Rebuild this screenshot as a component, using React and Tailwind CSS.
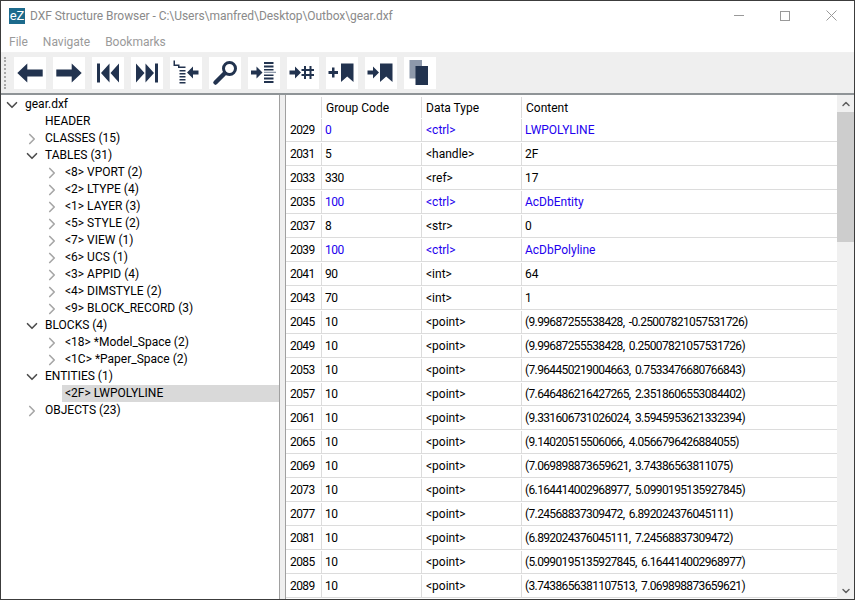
import { ChevronDown, ChevronRight, ChevronUp } from "lucide-react"

const NAVY = "#22334f"

const treeRows = [
  { label: "gear.dxf", indent: 0, arrow: "open" },
  { label: "HEADER", indent: 1 },
  { label: "CLASSES (15)", indent: 1, arrow: "closed" },
  { label: "TABLES (31)", indent: 1, arrow: "open" },
  { label: "<8> VPORT (2)", indent: 2, arrow: "closed" },
  { label: "<2> LTYPE (4)", indent: 2, arrow: "closed" },
  { label: "<1> LAYER (3)", indent: 2, arrow: "closed" },
  { label: "<5> STYLE (2)", indent: 2, arrow: "closed" },
  { label: "<7> VIEW (1)", indent: 2, arrow: "closed" },
  { label: "<6> UCS (1)", indent: 2, arrow: "closed" },
  { label: "<3> APPID (4)", indent: 2, arrow: "closed" },
  { label: "<4> DIMSTYLE (2)", indent: 2, arrow: "closed" },
  { label: "<9> BLOCK_RECORD (3)", indent: 2, arrow: "closed" },
  { label: "BLOCKS (4)", indent: 1, arrow: "open" },
  { label: "<18> *Model_Space (2)", indent: 2, arrow: "closed" },
  { label: "<1C> *Paper_Space (2)", indent: 2, arrow: "closed" },
  { label: "ENTITIES (1)", indent: 1, arrow: "open" },
  { label: "<2F> LWPOLYLINE", indent: 2, selected: true },
  { label: "OBJECTS (23)", indent: 1, arrow: "closed" },
]

const tableRows = [
  ["2029", "0", "<ctrl>", "LWPOLYLINE", true],
  ["2031", "5", "<handle>", "2F"],
  ["2033", "330", "<ref>", "17"],
  ["2035", "100", "<ctrl>", "AcDbEntity", true],
  ["2037", "8", "<str>", "0"],
  ["2039", "100", "<ctrl>", "AcDbPolyline", true],
  ["2041", "90", "<int>", "64"],
  ["2043", "70", "<int>", "1"],
  ["2045", "10", "<point>", "(9.99687255538428, -0.25007821057531726)"],
  ["2049", "10", "<point>", "(9.99687255538428, 0.25007821057531726)"],
  ["2053", "10", "<point>", "(7.964450219004663, 0.7533476680766843)"],
  ["2057", "10", "<point>", "(7.646486216427265, 2.3518606553084402)"],
  ["2061", "10", "<point>", "(9.331606731026024, 3.5945953621332394)"],
  ["2065", "10", "<point>", "(9.14020515506066, 4.0566796426884055)"],
  ["2069", "10", "<point>", "(7.069898873659621, 3.74386563811075)"],
  ["2073", "10", "<point>", "(6.164414002968977, 5.0990195135927845)"],
  ["2077", "10", "<point>", "(7.24568837309472, 6.892024376045111)"],
  ["2081", "10", "<point>", "(6.892024376045111, 7.24568837309472)"],
  ["2085", "10", "<point>", "(5.0990195135927845, 6.164414002968977)"],
  ["2089", "10", "<point>", "(3.7438656381107513, 7.069898873659621)"],
]

const ARROW_RIGHT = "M2.5 13.5H8V9.5L14 15.5L8 21.5V17.5H2.5Z"

const toolbarIcons = [
  <path key="back" d="M3.3 16L13.3 6.5V12.5H28.7V19.5H13.3V25.5Z" fill={NAVY} />,
  <path key="forward" d="M28.7 16L18.7 6.5V12.5H3.3V19.5H18.7V25.5Z" fill={NAVY} />,
  <path key="first" d="M5 6.5H8V25.5H5ZM9 16L17.5 6.5V25.5ZM18.5 16L27 6.5V25.5Z" fill={NAVY} />,
  <path key="last" d="M27 6.5H24V25.5H27ZM23 16L14.5 6.5V25.5ZM13.5 16L5 6.5V25.5Z" fill={NAVY} />,
  <g key="tree" fill={NAVY}>
    <path d="M3.5 3.5H5V7.5H9.5V9.5H15.5V11H8V9H3.5Z" />
    <path d="M9.5 13H15.5V14.5H9.5ZM9.5 16H15.5V17.5H9.5ZM9.5 19H15.5V20.5H9.5ZM9.5 22H15.5V23.5H9.5ZM9.5 25H15.5V26.5H9.5Z" />
    <path d="M17 15.5L23 9.5V13.5H28.5V17.5H23V21.5Z" />
  </g>,
  <g key="search">
    <circle cx="20.5" cy="11.5" r="6" fill="none" stroke={NAVY} strokeWidth="3" />
    <path d="M15.5 16.5L6.5 25.5" stroke={NAVY} strokeWidth="4.5" strokeLinecap="round" />
  </g>,
  <g key="goto-line" fill={NAVY}>
    <path d="M3 13.5H8.5V9.5L14.5 15.5L8.5 21.5V17.5H3Z" />
    <path d="M16 5H25.5V7H16ZM16 8.5H25.5V10.5H16ZM16 12H25.5V13.5H16Z" />
    <path d="M16 14.7H28V16H16Z" fill="#8e99ab" />
    <path d="M16 17.5H25.5V19H16ZM16 20.5H25.5V22.5H16ZM16 24H25.5V26H16Z" />
  </g>,
  <g key="goto-number" fill={NAVY}>
    <path d={ARROW_RIGHT} />
    <path d="M17 9H19V22H17ZM22.5 9H24.5V22H22.5ZM14.5 12H27V14H14.5ZM14.5 17H27V19H14.5Z" />
  </g>,
  <g key="add-bookmark" fill={NAVY}>
    <path d="M2.5 14H6V10.5H8.5V14H12V17H8.5V20.5H6V17H2.5Z" />
    <path d="M15 6.5H27.5V25L21.2 19.5L15 25Z" />
  </g>,
  <g key="goto-bookmark" fill={NAVY}>
    <path d={ARROW_RIGHT} />
    <path d="M15 6.5H27.5V25L21.2 19.5L15 25Z" />
  </g>,
  <g key="copy">
    <rect x="5.5" y="3" width="12.5" height="18.5" fill="#8e99ab" />
    <rect x="11.5" y="9" width="12.5" height="19" fill={NAVY} />
  </g>,
]

const TreeRow = ({ row }) => (
  <div className="flex h-[17px] items-center leading-[17px]">
    <div className={row.indent === 0 ? "w-0" : row.indent === 1 ? "w-5" : "w-10"} />
    <div className="flex w-[22px] pl-[2px]">
      {row.arrow === "open" && <ChevronDown size={18} strokeWidth={2.2} className="text-[#4d4d4d]" />}
      {row.arrow === "closed" && <ChevronRight size={18} strokeWidth={2.2} className="text-[#a6a6a6]" />}
    </div>
    <span className={`-ml-px h-[17px] pl-[3px] ${row.selected ? "flex-1 bg-[#d9d9d9]" : ""}`}>{row.label}</span>
  </div>
)

const TableRow = ({ row }) => {
  const [line, code, type, content, ctrl] = row
  const color = ctrl ? "text-[#2200ee]" : "text-black"
  const contentSpacing = content.startsWith("(") ? "tracking-[-0.63px] [word-spacing:2px]" : ""
  return (
    <div className="flex h-6 border-b border-[#dcdcdc] pt-[1px] leading-[23px]">
      <div className="w-9 shrink-0 border-r border-[#dcdcdc] pl-[4px] tracking-[-0.6px]">{line}</div>
      <div className={`w-[100px] shrink-0 border-r border-[#dcdcdc] pl-[3px] tracking-[-0.5px] ${color}`}>{code}</div>
      <div className={`w-[100px] shrink-0 border-r border-[#dcdcdc] pl-[4px] ${color}`}>{type}</div>
      <div className={`flex-1 pl-[3px] ${contentSpacing} ${color}`}>{content}</div>
    </div>
  )
}

export default function App() {
  return (
    <div className="flex h-[600px] w-[855px] flex-col overflow-hidden border border-[#3c3c3c] bg-white font-['Roboto',sans-serif] text-xs text-black">
      {/* Title bar */}
      <div className="flex h-[29px] shrink-0 items-center">
        <div className="ml-[8px] flex h-4 w-4 items-center justify-center bg-[#1c6a8c] text-[13px] leading-none text-white">eZ</div>
        <span className="ml-[5px] tracking-[-0.05px] text-[#8a8a8a]">DXF Structure Browser - C:\Users\manfred\Desktop\Outbox\gear.dxf</span>
        <div className="ml-auto flex items-center text-[#999999]">
          <div className="flex w-[46px] justify-center">
            <div className="h-px w-[10px] bg-[#999999]" />
          </div>
          <div className="flex w-[46px] justify-center">
            <div className="h-[10px] w-[10px] border border-[#999999]" />
          </div>
          <div className="flex w-[46px] justify-center">
            <svg width="11" height="11" viewBox="0 0 11 11" stroke="#999999" strokeWidth="1" fill="none">
              <path d="M0.5 0.5L10.5 10.5M10.5 0.5L0.5 10.5" />
            </svg>
          </div>
        </div>
      </div>

      {/* Menu */}
      <div className="flex h-[23px] shrink-0 items-center gap-[15px] border-b border-[#f0f0f0] pl-[8px] pt-[2px] text-[#9a9a9a]">
        <span>File</span>
        <span>Navigate</span>
        <span>Bookmarks</span>
      </div>

      {/* Toolbar */}
      <div className="flex h-[42px] shrink-0 items-center border-b-2 border-[#8f9497] bg-[#efefef] pl-[3px]">
        <div className="mr-[7px] h-8 w-[3px] border-l-2 border-dotted border-[#a8a8a8]" />
        <div className="flex gap-[7px]">
          {toolbarIcons.map((icon, i) => (
            <div key={i} className="h-8 w-8 bg-white">
              <svg width="32" height="32" viewBox="0 0 32 32">{icon}</svg>
            </div>
          ))}
        </div>
      </div>

      <div className="flex min-h-0 flex-1">
        {/* Tree */}
        <div className="w-[279px] shrink-0 border-r border-[#a0a0a0] pt-[1px]">
          {treeRows.map((row) => (
            <TreeRow key={row.label} row={row} />
          ))}
        </div>

        <div className="w-[5px] shrink-0 bg-[#efefef]" />

        {/* Table */}
        <div className="flex min-w-0 flex-1 border-l border-[#a0a0a0]">
          <div className="min-w-0 flex-1 overflow-hidden">
            <div className="flex h-[23px] pt-[2px] leading-[23px]">
              <div className="w-9 shrink-0 border-r border-[#dcdcdc]" />
              <div className="w-[100px] shrink-0 border-r border-[#dcdcdc] pl-1">Group Code</div>
              <div className="w-[100px] shrink-0 border-r border-[#dcdcdc] pl-1">Data Type</div>
              <div className="flex-1 pl-1">Content</div>
            </div>
            {tableRows.map((row) => (
              <TableRow key={row[0]} row={row} />
            ))}
          </div>

          {/* Scrollbar */}
          <div className="flex w-[17px] shrink-0 flex-col bg-[#f0f0f0]">
            <div className="flex h-[17px] items-center justify-center">
              <ChevronUp size={12} strokeWidth={3} className="text-[#606060]" />
            </div>
            <div className="h-[130px] bg-[#cdcdcd]" />
            <div className="mt-auto flex h-[17px] items-center justify-center">
              <ChevronDown size={12} strokeWidth={3} className="text-[#606060]" />
            </div>
          </div>
        </div>
      </div>
    </div>
  )
}
